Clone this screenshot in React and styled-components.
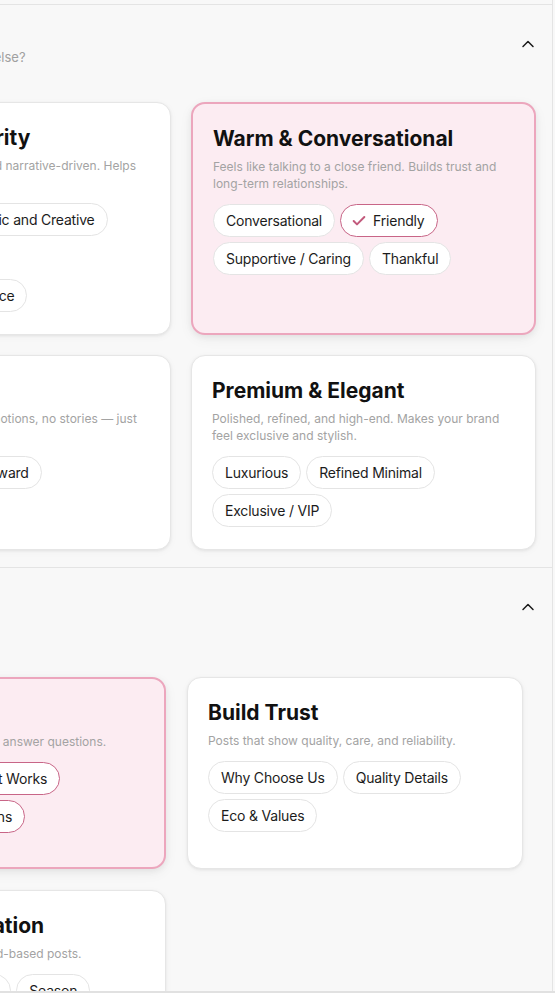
import React from "react";
import styled, { createGlobalStyle } from "styled-components";
import { Check, ChevronUp } from "lucide-react";

const GlobalStyle = createGlobalStyle`
  html, body { margin: 0; padding: 0; background: #f8f8f8; }
  body {
    font-family: Inter, "Noto Sans", "Liberation Sans", sans-serif;
    overflow: hidden;
    -webkit-font-smoothing: antialiased;
  }
`;

const Viewport = styled.div`
  height: 993px;
  box-sizing: border-box;
  overflow: hidden;
  border-bottom: 2px solid #e1e1e1;
`;

const Frame = styled.div`
  margin-left: -190px;
  width: 742px;
  padding-top: 4px;
  border-right: 1px solid #e4e4e4;
  min-height: 1200px;
`;

const Section = styled.section`
  border-top: 1px solid #e4e4e4;
  padding: 19px 14px 17px ${(p) => p.$padLeft}px;
`;

const Header = styled.div`
  display: flex;
  justify-content: space-between;
  align-items: flex-start;
  margin-bottom: ${(p) => p.$gap}px;
`;

const HeaderText = styled.div`
  display: flex;
  flex-direction: column;
`;

const SectionTitle = styled.h2`
  margin: 0;
  font-size: 16px;
  font-weight: 600;
  line-height: 24px;
  color: #1a1a1a;
`;

const SectionSub = styled.p`
  margin: 0;
  font-size: 13px;
  line-height: 18px;
  color: #a0a0a0;
`;

const Toggle = styled.button`
  margin-top: 10px;
  padding: 0;
  border: 0;
  background: none;
  color: #1a1a1a;
  display: flex;
  cursor: pointer;
`;

const Grid = styled.div`
  display: grid;
  grid-template-columns: repeat(2, ${(p) => p.$col}px);
  grid-auto-rows: minmax(${(p) => p.$minRow || 0}px, auto);
  column-gap: ${(p) => p.$colGap}px;
  row-gap: ${(p) => p.$rowGap}px;
`;

const Card = styled.div`
  box-sizing: border-box;
  background: ${(p) => (p.$selected ? "#fcecf2" : "#ffffff")};
  border: ${(p) => (p.$selected ? "2px solid #eca6bd" : "1px solid #e6e6e6")};
  border-radius: 14px;
  padding: 21px 20px 22px;
  box-shadow: ${(p) =>
    p.$selected
      ? "0 2px 6px rgba(0,0,0,0.06), 0 4px 14px rgba(0,0,0,0.05)"
      : "0 1px 3px rgba(0,0,0,0.07), 0 2px 8px rgba(0,0,0,0.03)"};
`;

const CardTitle = styled.h3`
  margin: 0;
  font-size: 21px;
  font-weight: 700;
  line-height: 28px;
  color: #111111;
`;

const CardDesc = styled.p`
  margin: 5px 0 0;
  font-size: 12px;
  line-height: 17px;
  color: #a3a3a3;
`;

const Chips = styled.div`
  display: flex;
  flex-wrap: wrap;
  gap: 5px;
  margin-top: 12px;
`;

const Chip = styled.span`
  display: inline-flex;
  align-items: center;
  gap: 6px;
  height: 33px;
  box-sizing: border-box;
  padding: ${(p) => (p.$selected ? "0 12px 0 10px" : "0 12px")};
  border: 1px solid ${(p) => (p.$selected ? "#c86587" : "#e4e4e4")};
  border-radius: 999px;
  background: #ffffff;
  font-size: 14px;
  letter-spacing: -0.2px;
  color: #1c1c1c;
  white-space: nowrap;
`;

const sections = [
  {
    title: "Brand Voice",
    sub: "Find a mood, or something else?",
    padLeft: 16,
    col: 345,
    colGap: 20,
    rowGap: 20,
    gap: 36,
    minRow: 0,
    cards: [
      {
        title: "Heartfelt & Clarity",
        desc: "Emotional, imaginative, and narrative-driven. Helps your brand stand out.",
        chips: [
          { t: "Imaginative" },
          { t: "Artistic and Creative" },
          { t: "Brand Storytelling" },
          { t: "Memorable Brand Voice" },
        ],
      },
      {
        title: "Warm & Conversational",
        selected: true,
        desc: "Feels like talking to a close friend. Builds trust and long-term relationships.",
        chips: [
          { t: "Conversational" },
          { t: "Friendly", s: true },
          { t: "Supportive / Caring" },
          { t: "Thankful" },
        ],
      },
      {
        title: "Clear & Direct",
        desc: "Simple, to the point. No emotions, no stories — just the facts.",
        chips: [{ t: "Direct" }, { t: "Straightforward" }, { t: "Just the Facts" }],
      },
      {
        title: "Premium & Elegant",
        desc: "Polished, refined, and high-end. Makes your brand feel exclusive and stylish.",
        chips: [
          { t: "Luxurious" },
          { t: "Refined Minimal" },
          { t: "Exclusive / VIP" },
        ],
      },
    ],
  },
  {
    title: "Post Goals",
    sub: "What should posts do?",
    padLeft: 20,
    col: 336,
    colGap: 21,
    rowGap: 21,
    gap: 48,
    minRow: 192,
    cards: [
      {
        title: "Educate",
        selected: true,
        desc: "Tips that teach, guide and answer questions.",
        chips: [
          { t: "Guides" },
          { t: "How It Works", s: true },
          { t: "Common Questions", s: true },
        ],
      },
      {
        title: "Build Trust",
        desc: "Posts that show quality, care, and reliability.",
        chips: [
          { t: "Why Choose Us" },
          { t: "Quality Details" },
          { t: "Eco & Values" },
        ],
      },
      {
        title: "Trend & Inspiration",
        desc: "Timely, seasonal and trend-based posts.",
        chips: [{ t: "Holidays & Launches" }, { t: "Season" }, { t: "Trending" }],
      },
    ],
  },
];

export default function App() {
  return (
    <>
      <GlobalStyle />
      <Viewport>
        <Frame>
          {sections.map((sec) => (
            <Section key={sec.title} $padLeft={sec.padLeft}>
              <Header $gap={sec.gap}>
                <HeaderText>
                  <SectionTitle>{sec.title}</SectionTitle>
                  <SectionSub>{sec.sub}</SectionSub>
                </HeaderText>
                <Toggle aria-label="Collapse">
                  <ChevronUp size={20} strokeWidth={1.8} />
                </Toggle>
              </Header>
              <Grid
                $col={sec.col}
                $colGap={sec.colGap}
                $rowGap={sec.rowGap}
                $minRow={sec.minRow}
              >
                {sec.cards.map((c) => (
                  <Card key={c.title} $selected={c.selected}>
                    <CardTitle>{c.title}</CardTitle>
                    <CardDesc>{c.desc}</CardDesc>
                    <Chips>
                      {c.chips.map((ch) => (
                        <Chip key={ch.t} $selected={ch.s}>
                          {ch.s && <Check size={16} strokeWidth={3} color="#c25a7c" />}
                          {ch.t}
                        </Chip>
                      ))}
                    </Chips>
                  </Card>
                ))}
              </Grid>
            </Section>
          ))}
        </Frame>
      </Viewport>
    </>
  );
}
